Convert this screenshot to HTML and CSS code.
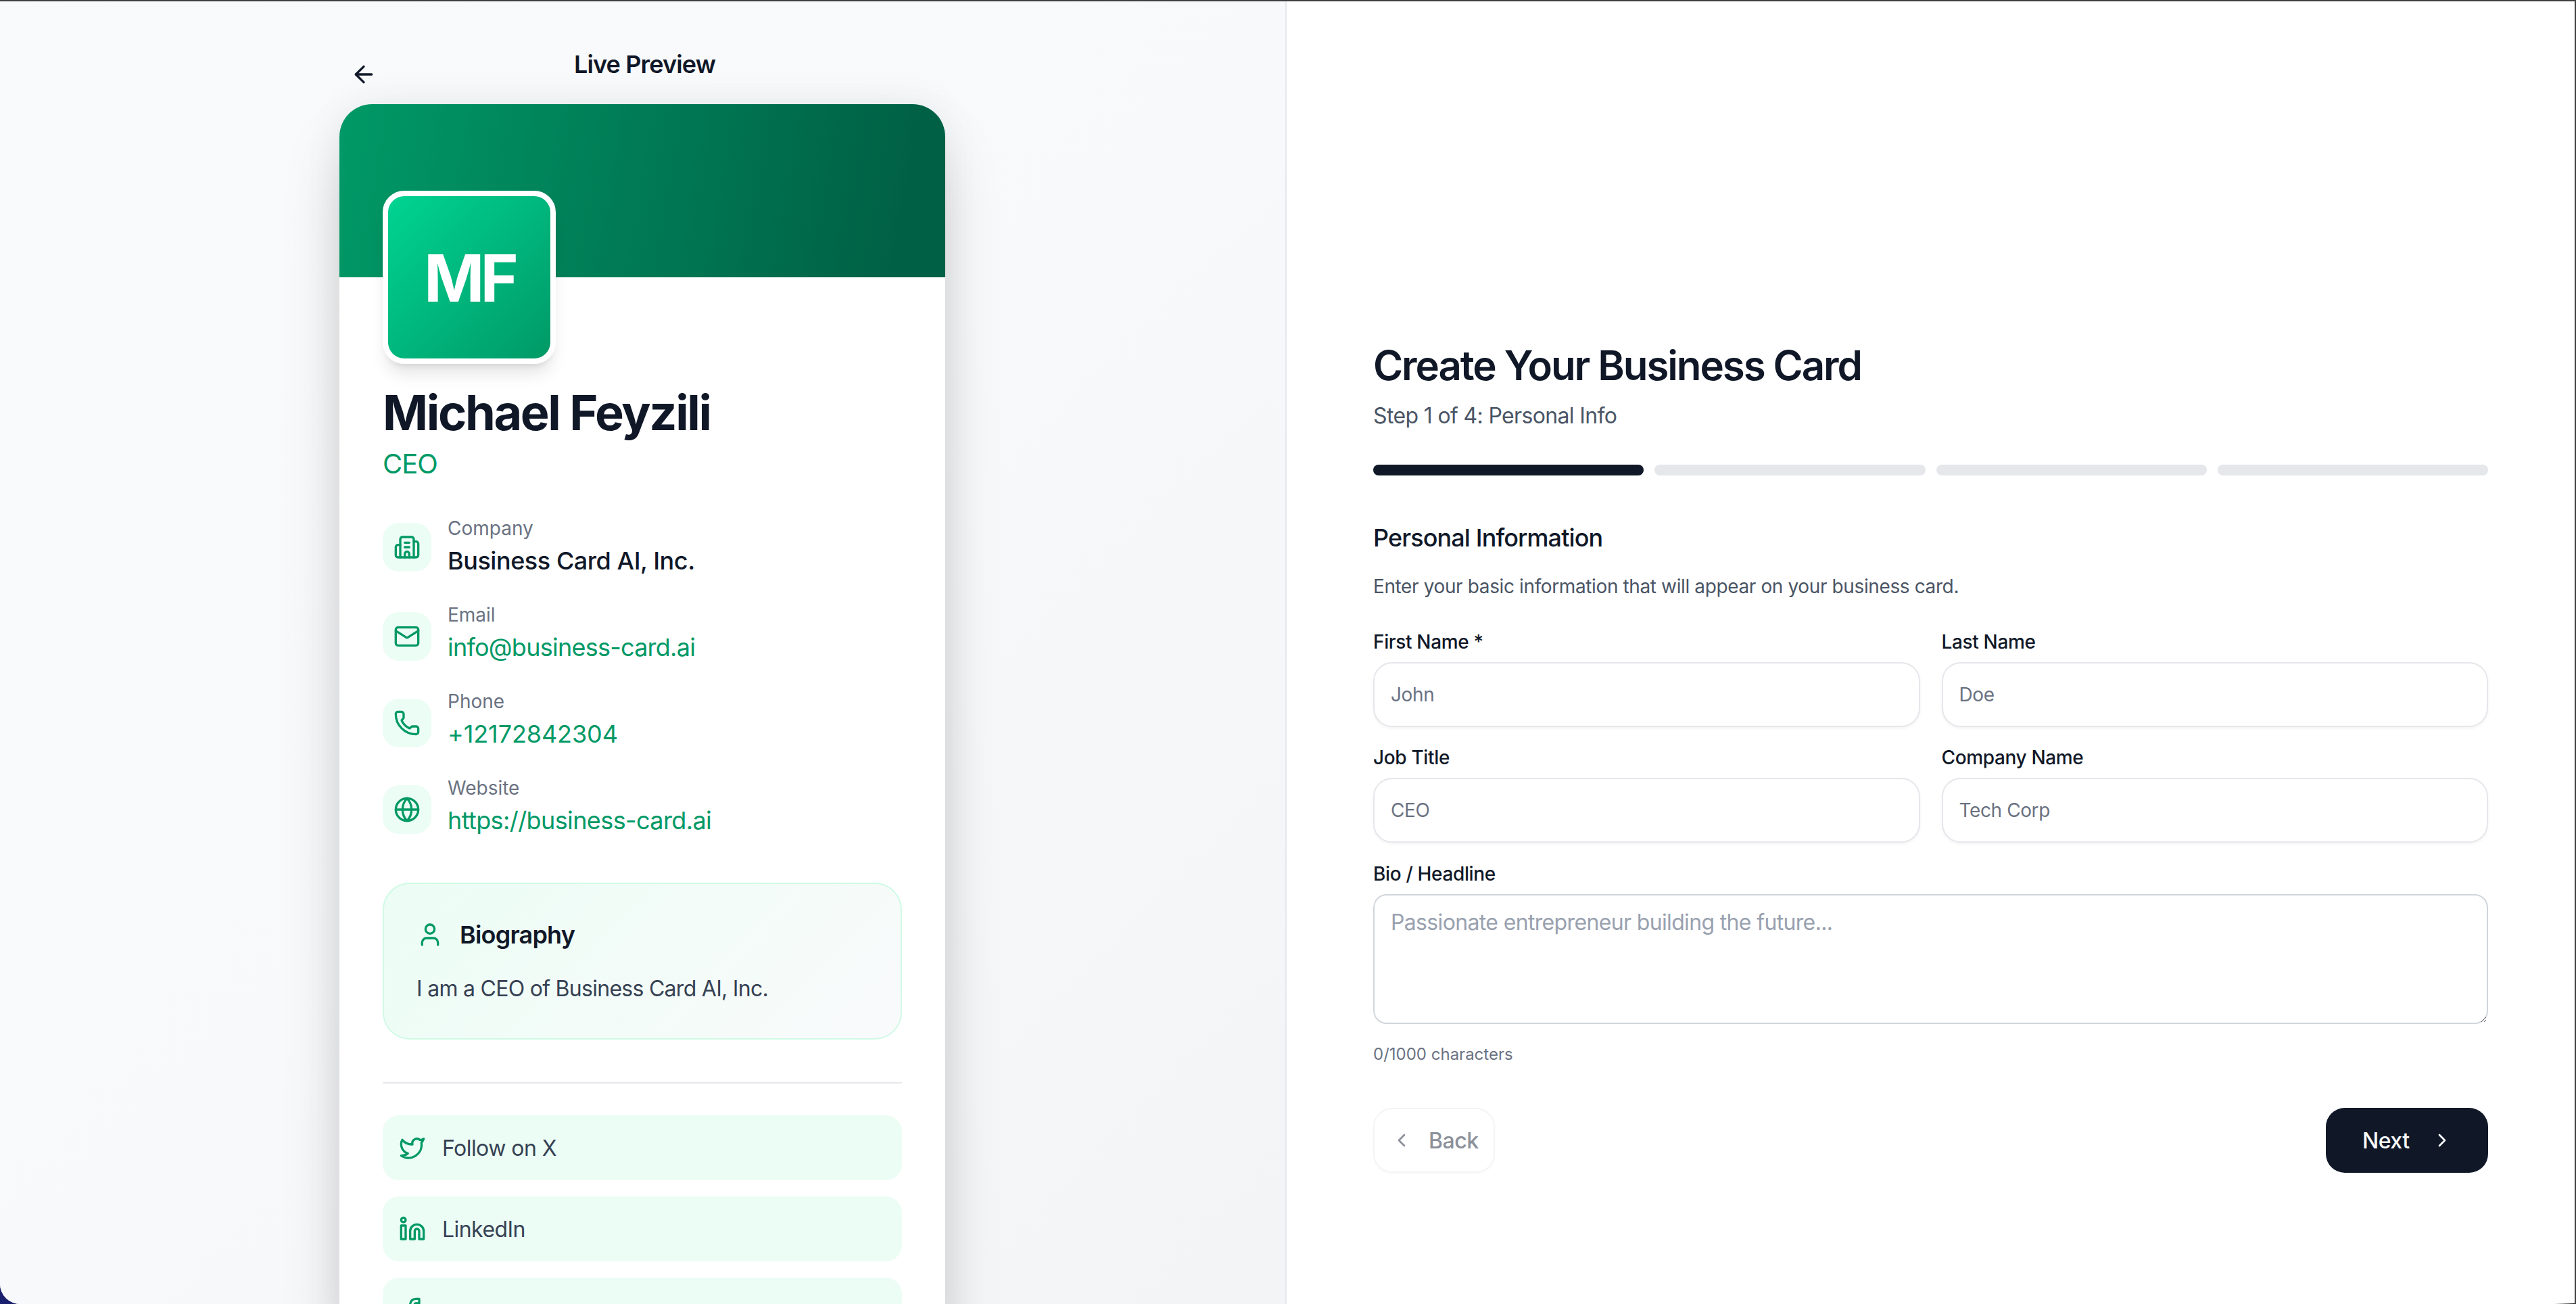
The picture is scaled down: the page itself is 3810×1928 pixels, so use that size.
FILE: index.html
```html
<!DOCTYPE html>
<html lang="en">
<head>
<meta charset="utf-8">
<title>Create Your Business Card</title>
<link rel="stylesheet" href="styles.css">
</head>
<body>
<div class="window">
  <section class="preview">
    <header class="preview-head">
      <button class="back-arrow" type="button" aria-label="Back">
        <svg class="ic-40" viewBox="0 0 24 24"><path d="m12 19-7-7 7-7"/><path d="M19 12H5"/></svg>
      </button>
      <h2 class="preview-title">Live Preview</h2>
    </header>
    <article class="card">
      <div class="card-banner"></div>
      <div class="card-body">
        <div class="avatar">MF</div>
        <h1 class="name">Michael Feyzili</h1>
        <p class="role">CEO</p>
        <ul class="contacts">
          <li class="contact contact-center">
            <span class="contact-ic"><svg class="ic-40 green" viewBox="0 0 24 24"><path d="M10 12h4"/><path d="M10 8h4"/><path d="M14 21v-3a2 2 0 0 0-4 0v3"/><path d="M6 10H4a2 2 0 0 0-2 2v7a2 2 0 0 0 2 2h16a2 2 0 0 0 2-2V9a2 2 0 0 0-2-2h-2"/><path d="M6 21V5a2 2 0 0 1 2-2h8a2 2 0 0 1 2 2v16"/></svg></span>
            <div class="contact-text"><span class="contact-label">Company</span><span class="contact-value dark">Business Card AI, Inc.</span></div>
          </li>
          <li class="contact">
            <span class="contact-ic"><svg class="ic-40 green" viewBox="0 0 24 24"><path d="m22 7-8.991 5.727a2 2 0 0 1-2.009 0L2 7"/><rect x="2" y="4" width="20" height="16" rx="2"/></svg></span>
            <div class="contact-text"><span class="contact-label">Email</span><span class="contact-value mail">info@business-card.ai</span></div>
          </li>
          <li class="contact">
            <span class="contact-ic"><svg class="ic-40 green" viewBox="0 0 24 24"><path d="M13.832 16.568a1 1 0 0 0 1.213-.303l.355-.465A2 2 0 0 1 17 15h3a2 2 0 0 1 2 2v3a2 2 0 0 1-2 2A18 18 0 0 1 2 4a2 2 0 0 1 2-2h3a2 2 0 0 1 2 2v3a2 2 0 0 1-.8 1.6l-.468.351a1 1 0 0 0-.292 1.233 14 14 0 0 0 6.392 6.384"/></svg></span>
            <div class="contact-text"><span class="contact-label">Phone</span><span class="contact-value digits">+12172842304</span></div>
          </li>
          <li class="contact">
            <span class="contact-ic"><svg class="ic-40 green" viewBox="0 0 24 24"><circle cx="12" cy="12" r="10"/><path d="M12 2a14.5 14.5 0 0 0 0 20 14.5 14.5 0 0 0 0-20"/><path d="M2 12h20"/></svg></span>
            <div class="contact-text"><span class="contact-label">Website</span><span class="contact-value">https://business-card.ai</span></div>
          </li>
        </ul>
        <div class="bio">
          <div class="bio-head">
            <svg class="ic-40 green" viewBox="0 0 24 24"><path d="M19 21v-2a4 4 0 0 0-4-4H9a4 4 0 0 0-4 4v2"/><circle cx="12" cy="7" r="4"/></svg>
            <h3 class="bio-title">Biography</h3>
          </div>
          <p class="bio-text">I am a CEO of Business Card AI, Inc.</p>
        </div>
        <hr class="rule">
        <div class="socials">
          <a class="social"><svg class="ic-40 green" viewBox="0 0 24 24"><path d="M22 4s-.7 2.1-2 3.4c1.6 10-9.4 17.3-18 11.6 2.2.1 4.4-.6 6-2C3 15.5.5 9.6 3 5c2.2 2.6 5.6 4.1 9 4-.9-4.2 4-6.6 7-3.8 1.1 0 3-1.2 3-1.2z"/></svg><span>Follow on X</span></a>
          <a class="social"><svg class="ic-40 green" viewBox="0 0 24 24"><path d="M16 8a6 6 0 0 1 6 6v7h-4v-7a2 2 0 0 0-2-2 2 2 0 0 0-2 2v7h-4v-7a6 6 0 0 1 6-6z"/><rect x="2" y="9" width="4" height="12"/><circle cx="4" cy="4" r="2"/></svg><span>LinkedIn</span></a>
          <a class="social" aria-label="Facebook"><svg class="ic-40 green" viewBox="0 0 24 24"><path d="M18 2h-3a5 5 0 0 0-5 5v3H7v4h3v8h4v-8h3l1-4h-4V7a1 1 0 0 1 1-1h3z"/></svg></a>
        </div>
      </div>
    </article>
  </section>
  <main class="wizard">
    <h1 class="wiz-title">Create Your Business Card</h1>
    <p class="wiz-step">Step 1 of 4: Personal Info</p>
    <div class="progress">
      <span class="bar bar-on"></span><span class="bar"></span><span class="bar"></span><span class="bar"></span>
    </div>
    <h2 class="sec-title">Personal Information</h2>
    <p class="sec-desc">Enter your basic information that will appear on your business card.</p>
    <form class="form">
      <div class="grid">
        <label class="field"><span class="field-label">First Name *</span><input class="input" placeholder="John"></label>
        <label class="field"><span class="field-label">Last Name</span><input class="input" placeholder="Doe"></label>
        <label class="field"><span class="field-label">Job Title</span><input class="input" placeholder="CEO"></label>
        <label class="field"><span class="field-label">Company Name</span><input class="input" placeholder="Tech Corp"></label>
      </div>
      <label class="field bio-field"><span class="field-label">Bio / Headline</span><textarea class="textarea" placeholder="Passionate entrepreneur building the future..."></textarea></label>
      <p class="counter">0/1000 characters</p>
      <div class="actions">
        <button class="btn btn-back" type="button"><svg class="ic-32" viewBox="0 0 24 24"><path d="m15 18-6-6 6-6"/></svg>Back</button>
        <button class="btn btn-next" type="button">Next<svg class="ic-32" viewBox="0 0 24 24"><path d="m9 18 6-6-6-6"/></svg></button>
      </div>
    </form>
  </main>
</div>
</body>
</html>
```

FILE: styles.css
```css
* { box-sizing: border-box; }
html, body { margin: 0; height: 100%; }
body {
  background: linear-gradient(90deg, #1a1f6e 0, #0b0d2a 100%);
  font-family: Inter, "Noto Sans", sans-serif;
  color: #101828;
  overflow: hidden;
}
h1, h2, h3, p, ul { margin: 0; padding: 0; }
ul { list-style: none; }

.window {
  position: relative;
  display: flex;
  width: 3810px;
  height: 1928px;
  border-top: 2px solid #3f3f3f;
  border-right: 2px solid #3f3f3f;
  border-bottom-left-radius: 30px;
  overflow: hidden;
  background: #fff;
}
.window::after {
  content: "";
  position: absolute;
  right: 0;
  bottom: 0;
  width: 30px;
  height: 1px;
  background: linear-gradient(90deg, rgba(20, 20, 20, 0), #141414);
}

.ic-40, .ic-32 {
  fill: none;
  stroke: currentColor;
  stroke-linecap: round;
  stroke-linejoin: round;
  flex: none;
  display: block;
}
.ic-40 { width: 40px; height: 40px; stroke-width: 2; }
.ic-32 { width: 32px; height: 32px; stroke-width: 2; }
.green { color: #009966; }

/* Left preview */
.preview {
  width: 1901px;
  flex: none;
  height: 100%;
  overflow: hidden;
  background: linear-gradient(135deg, #f9fafb 0%, #f8f9fb 50%, #f3f4f6 100%);
  padding: 62px 503px 0 502px;
}
.preview-head {
  display: flex;
  align-items: flex-start;
  width: 896px;
  height: 90px;
}
.back-arrow {
  width: 40px;
  height: 40px;
  margin: 26px -56px 0 16px;
  padding: 0;
  border: 0;
  background: none;
  color: #101828;
  flex: none;
}
.preview-title {
  flex: 1;
  padding: 3px 0 0 7px;
  text-align: center;
  font-size: 36px;
  line-height: 56px;
  font-weight: 600;
  letter-spacing: -.85px;
  color: #101828;
}
.card {
  width: 896px;
  background: #fff;
  border-radius: 48px;
  box-shadow: 0 50px 100px -24px rgba(0, 0, 0, .25), 0 0 60px rgba(0, 0, 0, .06);
}
.card-banner {
  height: 256px;
  border-radius: 48px 48px 0 0;
  background: linear-gradient(100deg, #009966 0%, #006045 92%);
}
.card-body { padding: 0 64px; }
.avatar {
  width: 256px;
  height: 256px;
  margin-top: -128px;
  padding-top: 2px;
  position: relative;
  display: flex;
  align-items: center;
  justify-content: center;
  border: 8px solid #fff;
  border-radius: 32px;
  background: linear-gradient(135deg, #00d492 0%, #009966 100%);
  color: #fff;
  font-size: 96px;
  font-weight: 700;
  letter-spacing: -6px;
  box-shadow: 0 20px 25px -5px rgba(0, 0, 0, .1), 0 8px 10px -6px rgba(0, 0, 0, .1);
}
.name {
  margin-top: 32px;
  font-size: 72px;
  line-height: 80px;
  font-weight: 700;
  letter-spacing: -2.35px;
  color: #101828;
}
.role {
  margin-top: 8px;
  font-size: 40px;
  line-height: 56px;
  font-weight: 400;
  letter-spacing: -1px;
  color: #009966;
}
.contacts { margin-top: 47px; display: flex; flex-direction: column; gap: 32px; }
.contact { display: flex; align-items: flex-start; gap: 24px; height: 96px; }
.contact-center { align-items: center; }
.contact-ic {
  width: 72px;
  height: 72px;
  flex: none;
  display: flex;
  align-items: center;
  justify-content: center;
  border-radius: 24px;
  background: #ecfdf5;
  margin-top: 16px;
}
.contact-center .contact-ic { margin-top: 0; }
.contact-text { display: flex; flex-direction: column; }
.contact-label { font-size: 28px; line-height: 40px; color: #6a7282; }
.contact-value { font-size: 36px; line-height: 56px; font-weight: 400; letter-spacing: -.6px; color: #009966; }
.contact-value.dark { color: #101828; font-weight: 500; letter-spacing: -.45px; }
.contact-value.mail { letter-spacing: -.75px; }
.contact-value.digits { letter-spacing: -.1px; }
.bio {
  margin-top: 64px;
  height: 232px;
  padding: 51px 48px 0;
  border: 2px solid #d0fae5;
  border-radius: 40px;
  background: linear-gradient(135deg, #ecfdf5 0%, #f9fafb 100%);
}
.bio-head { display: flex; align-items: center; gap: 24px; height: 48px; }
.bio-title { font-size: 36px; font-weight: 600; letter-spacing: -.8px; color: #101828; }
.bio-text { margin-top: 30px; font-size: 32px; line-height: 52px; letter-spacing: -.72px; color: #364153; }
.rule { margin: 63px 0 47px; border: 0; border-top: 2px solid #e5e7eb; height: 0; }
.socials { display: flex; flex-direction: column; gap: 24px; }
.social {
  display: flex;
  align-items: center;
  gap: 24px;
  height: 96px;
  padding: 0 24px;
  border-radius: 24px;
  background: #ecfdf5;
  font-size: 32px;
  letter-spacing: -.55px;
  color: #364153;
}

/* Right wizard */
.wizard {
  flex: 1;
  min-width: 0;
  padding: 502px 128px 0 128px;
  border-left: 2px solid #e5e7eb;
  background: #fff;
}
.wiz-title { font-size: 60px; line-height: 72px; font-weight: 600; letter-spacing: -2.1px; color: #101828; }
.wiz-step { margin-top: 15px; font-size: 32px; line-height: 48px; letter-spacing: -.65px; color: #4a5565; }
.progress { display: flex; gap: 16px; margin-top: 48px; }
.bar { flex: 1; height: 16px; border-radius: 8px; background: #e5e7eb; }
.bar-on { background: #101828; }
.sec-title { margin-top: 64px; font-size: 36px; line-height: 56px; font-weight: 500; letter-spacing: -.9px; color: #101828; }
.sec-desc { margin-top: 24px; font-size: 28px; line-height: 40px; letter-spacing: -.38px; color: #4a5565; }
.form { margin-top: 42px; }
.grid { display: grid; grid-template-columns: 1fr 1fr; column-gap: 32px; row-gap: 25px; }
.field { display: flex; flex-direction: column; gap: 10px; }
.field-label { font-size: 28px; line-height: 40px; font-weight: 500; letter-spacing: -.35px; color: #101828; }
.input {
  height: 96px;
  padding: 0 24px;
  border: 2px solid #e5e7eb;
  border-radius: 28px;
  background: #fff;
  font: 28px Inter, "Noto Sans", sans-serif;
  letter-spacing: -.4px;
  color: #101828;
  box-shadow: 0 2px 4px rgba(0, 0, 0, .05);
  outline: none;
}
.input::placeholder { color: #6a7282; opacity: 1; }
.bio-field { margin-top: 26px; }
.textarea {
  height: 192px;
  padding: 20px 24px;
  border: 2px solid #d1d5dc;
  border-radius: 20px;
  background: #fff;
  font: 32px/40px Inter, "Noto Sans", sans-serif;
  letter-spacing: -.65px;
  resize: vertical;
  outline: none;
}
.textarea::placeholder { color: #99a1af; opacity: 1; }
.counter { margin-top: 27px; font-size: 24px; line-height: 36px; color: #6a7282; }
.actions { display: flex; justify-content: space-between; margin-top: 61px; }
.btn {
  height: 96px;
  display: flex;
  align-items: center;
  border-radius: 28px;
  font: 500 32px Inter, "Noto Sans", sans-serif;
  letter-spacing: -.5px;
  border: 2px solid transparent;
  padding: 0;
}
.btn-back {
  width: 180px;
  gap: 24px;
  padding-left: 24px;
  background: #fff;
  border-color: #f3f4f6;
  color: #8b909a;
  box-shadow: 0 2px 4px rgba(0, 0, 0, .025);
}
.btn-next {
  width: 240px;
  gap: 32px;
  padding-left: 52px;
  background: #101828;
  color: #f9fafb;
}
```
